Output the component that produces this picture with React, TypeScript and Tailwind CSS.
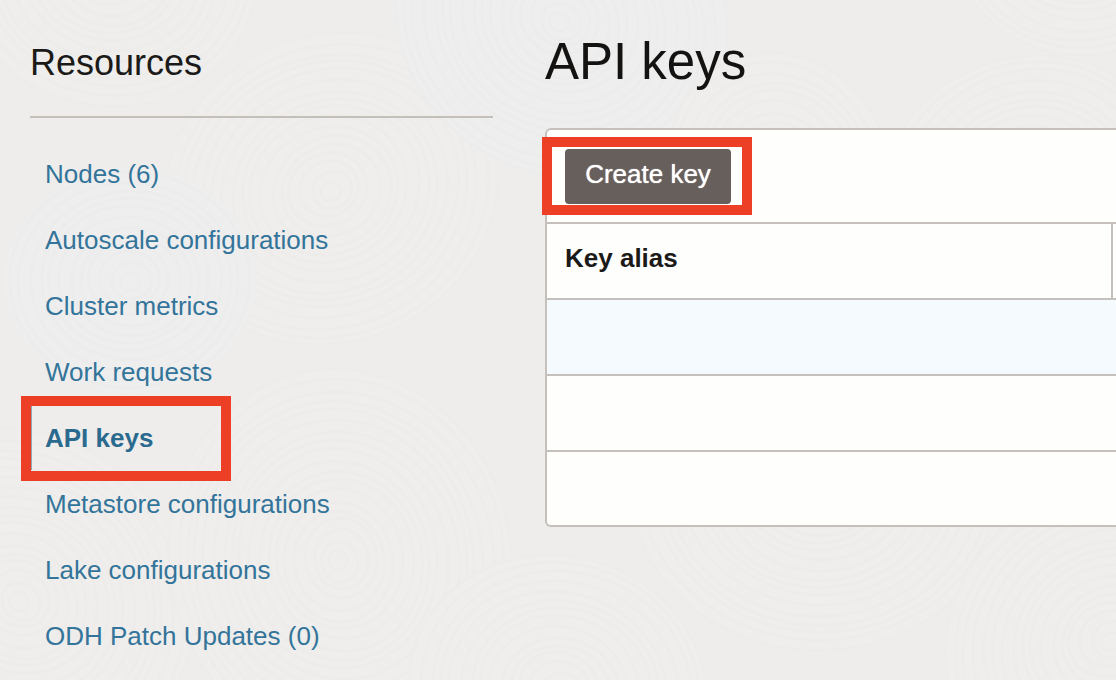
import React from "react";

type Resource = { label: string; active?: boolean };

const resources: Resource[] = [
  { label: "Nodes (6)" },
  { label: "Autoscale configurations" },
  { label: "Cluster metrics" },
  { label: "Work requests" },
  { label: "API keys", active: true },
  { label: "Metastore configurations" },
  { label: "Lake configurations" },
  { label: "ODH Patch Updates (0)" },
];

type Swirl = { x: number; y: number; r: number; tilt: number; cool?: boolean };

const swirls: Swirl[] = [
  { x: 110, y: -30, r: 150, tilt: 10 },
  { x: 330, y: 190, r: 170, tilt: -25 },
  { x: 20, y: 600, r: 180, tilt: 40 },
  { x: 340, y: 560, r: 190, tilt: 80 },
  { x: 130, y: 280, r: 125, tilt: 0, cool: true },
  { x: 560, y: 20, r: 170, tilt: 30, cool: true },
  { x: 820, y: 480, r: 190, tilt: 0 },
  { x: 1110, y: 640, r: 170, tilt: -30 },
  { x: 560, y: 690, r: 150, tilt: 15 },
  { x: 780, y: 170, r: 120, tilt: 60 },
  { x: 1080, y: -60, r: 130, tilt: 0 },
  { x: 1030, y: 190, r: 150, tilt: -20 },
];

function Backdrop() {
  return (
    <svg
      aria-hidden="true"
      className="absolute inset-0 -z-10 h-full w-full"
      viewBox="0 0 1116 680"
      preserveAspectRatio="xMidYMid slice"
    >
      {swirls.map((s) => (
        <g
          key={`${s.x}-${s.y}`}
          fill="none"
          strokeWidth={3}
          transform={`rotate(${s.tilt} ${s.x} ${s.y})`}
        >
          <ellipse cx={s.x} cy={s.y} rx={s.r} ry={s.r * 0.9} fill={s.cool ? "#eeeeee" : "#efeeec"} />
          {Array.from({ length: Math.floor(s.r / 10) }, (_, i) => (
            <ellipse
              key={i}
              cx={s.x + Math.sin(i * 1.7) * 2}
              cy={s.y + Math.cos(i * 1.3) * 2}
              rx={(i + 1) * 10}
              ry={(i + 1) * 9}
              stroke={s.cool ? "#ececed" : "#edecea"}
            />
          ))}
        </g>
      ))}
    </svg>
  );
}

function Highlight({ className }: { className: string }) {
  return (
    <span
      aria-hidden="true"
      className={`pointer-events-none absolute border-10 border-[#ec3f25] ${className}`}
    />
  );
}

function Sidebar() {
  return (
    <aside className="w-[463px] shrink-0">
      <h2 className="border-b-2 border-[#c5bfba] pt-[41px] pb-[31px] text-4xl leading-[44px] text-[#1b1a19]">
        Resources
      </h2>
      <nav aria-label="Resources" className="mt-6">
        <ul>
          {resources.map((item) => (
            <li key={item.label} className="relative h-[66px]">
              <a
                href="#"
                aria-current={item.active ? "page" : undefined}
                className={`flex h-16 items-center border-l-2 pl-[13px] text-[26px] ${
                  item.active
                    ? "border-[#8fa9b8] font-bold text-[#2a6a8f]"
                    : "border-transparent text-[#33749a]"
                }`}
              >
                {item.label}
              </a>
              {item.active && <Highlight className="-top-[10px] -left-[9px] h-[85px] w-[210px]" />}
            </li>
          ))}
        </ul>
      </nav>
    </aside>
  );
}

function KeysPanel() {
  return (
    <main className="min-w-0 flex-1">
      <h1 className="pt-8 pb-9 text-[51px] leading-[60px] text-[#141312]">API keys</h1>
      <section className="rounded-l-md border-2 border-r-0 border-[#c5c0bc] bg-[#fefefc]">
        <div className="flex h-[92px] items-center pl-[18px]">
          <div className="relative">
            <button
              type="button"
              className="flex h-[55px] w-[166px] items-center justify-center rounded bg-[#665f5b] pb-1 text-[26px] text-white [text-shadow:0_0_1px_white]"
            >
              Create key
            </button>
            <Highlight className="-top-3 -left-[23px] h-[78px] w-[210px]" />
          </div>
        </div>
        <table className="w-full border-separate border-spacing-0">
          <thead>
            <tr className="h-[76px]">
              <th
                scope="col"
                className="border-t-2 border-r-2 border-[#c5c0bc] pb-1.5 pl-[18px] text-left text-[26px] leading-8 font-bold text-[#1b1a19]"
              >
                Key alias
              </th>
              <td className="w-[3px] border-t-2 border-[#c5c0bc] p-0" />
            </tr>
          </thead>
          <tbody>
            <tr className="h-[76px] bg-[#f5fafe]">
              <td colSpan={2} className="border-t-2 border-[#c5c0bc]" />
            </tr>
            <tr className="h-[76px]">
              <td colSpan={2} className="border-t-2 border-[#c5c0bc]" />
            </tr>
            <tr className="h-[75px]">
              <td colSpan={2} className="border-t-2 border-[#c5c0bc]" />
            </tr>
          </tbody>
        </table>
      </section>
    </main>
  );
}

export default function App() {
  return (
    <div className="relative isolate flex min-h-screen gap-[52px] overflow-hidden bg-[#eeedeb] pl-[30px] font-['Liberation_Sans',Arial,sans-serif]">
      <Backdrop />
      <Sidebar />
      <KeysPanel />
    </div>
  );
}
